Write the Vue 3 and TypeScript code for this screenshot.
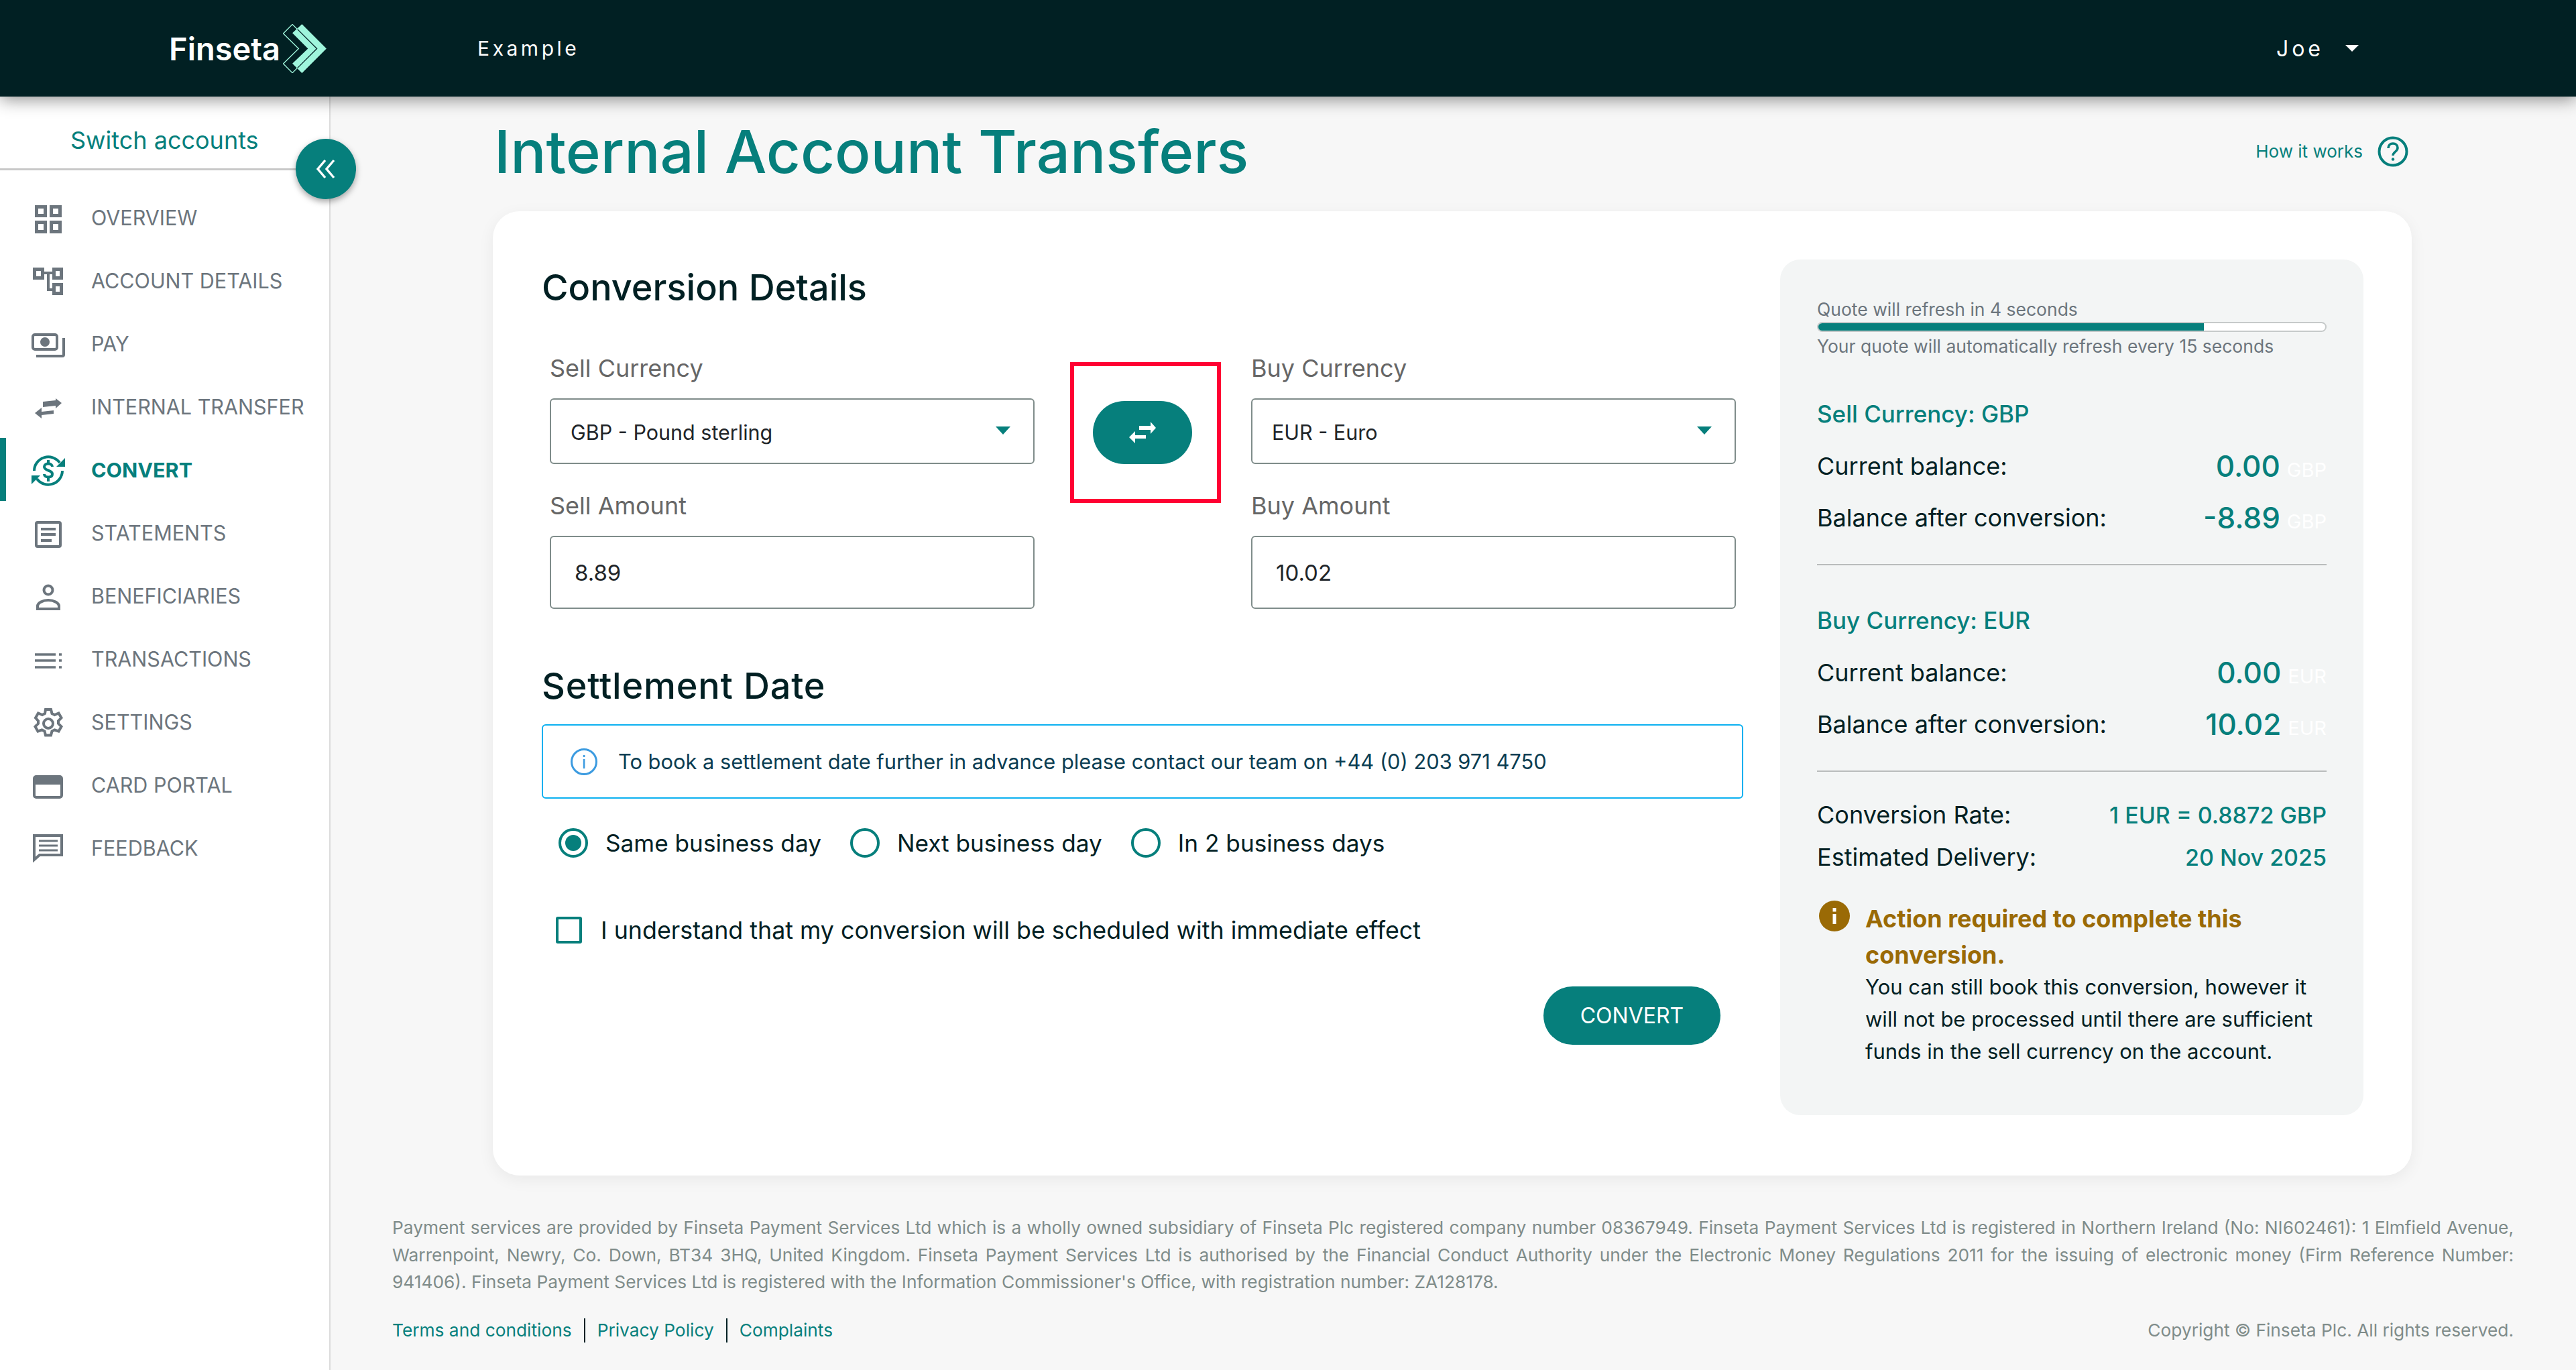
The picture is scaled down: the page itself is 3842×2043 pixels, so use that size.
<template>
  <div class="page">
    <header class="topbar">
      <div class="brand">
        <span class="brand-name">Finseta</span>
        <svg class="brand-mark" viewBox="0 0 195 220" width="65" height="73">
          <polygon points="85,0 195,110 85,220 42,177 112,110 42,40" fill="#9ff5dc" />
          <polygon points="42,1 1,42 70,110 1,178 42,219 152,110" fill="none" stroke="#9ff5dc" stroke-width="4" />
          <polyline points="65,23 152,110 65,197" fill="none" stroke="#012023" stroke-width="4" />
        </svg>
      </div>
      <span class="company">Example</span>
      <div class="user">
        <span>Joe</span>
        <i class="user-caret"></i>
      </div>
    </header>

    <div class="body">
      <aside class="sidebar">
        <div class="switch">Switch accounts</div>
        <button class="collapse" type="button">
          <svg viewBox="0 0 32 30" width="32" height="30" fill="none" stroke="#fff" stroke-width="3.4">
            <polyline points="15,2 4,15 15,28" />
            <polyline points="28,2 17,15 28,28" />
          </svg>
        </button>
        <nav class="nav">
          <a v-for="item in navItems" :key="item.label" class="nav-item" :class="{ active: item.active }">
            <svg class="nav-icon" viewBox="0 0 50 50" width="50" height="50" v-html="item.icon"></svg>
            <span>{{ item.label }}</span>
          </a>
        </nav>
      </aside>

      <main class="content">
        <div class="title-row">
          <h1>Internal Account Transfers</h1>
          <a class="how">
            <span>How it works</span>
            <svg viewBox="0 0 46 46" width="46" height="46" fill="none" stroke="#067f7c">
              <circle cx="23" cy="23" r="20.5" stroke-width="4" />
              <path d="M16 18c0-4.500 3-7 7-7s7 2.500 7 6.500c0 5.500-7 6-7 11.500" stroke-width="3.600" />
              <circle cx="23" cy="34.500" r="2.200" fill="#067f7c" stroke="none" />
            </svg>
          </a>
        </div>

        <section class="card">
          <div class="form">
            <h2>Conversion Details</h2>
            <div class="fields">
              <div class="field-col">
                <label>Sell Currency</label>
                <div class="select">GBP - Pound sterling<i class="caret"></i></div>
                <label class="second">Sell Amount</label>
                <div class="input">8.89</div>
              </div>
              <div class="swap-col">
                <div class="highlight">
                  <button class="swap" type="button">
                    <svg viewBox="0 0 44 34" width="44" height="34" fill="#fff">
                      <polygon points="17,7 34,7 34,1 42,10 34,19 34,13 17,13" />
                      <polygon points="27,21 11,21 11,15 2,24 11,33 11,26 27,26" />
                    </svg>
                  </button>
                </div>
              </div>
              <div class="field-col">
                <label>Buy Currency</label>
                <div class="select">EUR - Euro<i class="caret"></i></div>
                <label class="second">Buy Amount</label>
                <div class="input">10.02</div>
              </div>
            </div>

            <h2 class="settlement">Settlement Date</h2>
            <div class="alert">
              <svg viewBox="0 0 42 42" width="42" height="42" fill="none">
                <circle cx="21" cy="21" r="18.500" stroke="#3c9be0" stroke-width="3" />
                <rect x="19.800" y="17" width="2.600" height="14" fill="#3c9be0" />
                <rect x="19.800" y="11" width="2.600" height="3" fill="#3c9be0" />
              </svg>
              <span>To book a settlement date further in advance please contact our team on +44 (0) 203 971 4750</span>
            </div>
            <div class="radios">
              <label v-for="(opt, i) in dates" :key="opt" class="radio" :class="{ on: i === 0 }">
                <i></i>
                <span>{{ opt }}</span>
              </label>
            </div>
            <label class="check">
              <i></i>
              <span>I understand that my conversion will be scheduled with immediate effect</span>
            </label>
            <div class="actions">
              <button class="convert" type="button">CONVERT</button>
            </div>
          </div>

          <aside class="summary">
            <div class="quote">Quote will refresh in 4 seconds</div>
            <div class="bar"><div class="bar-fill" :style="{ width: progress + '%' }"></div></div>
            <div class="quote under">Your quote will automatically refresh every 15 seconds</div>

            <h3 class="sell-head">Sell Currency: GBP</h3>
            <div class="bal first">
              <span>Current balance:</span>
              <span class="amt">0.00<small>GBP</small></span>
            </div>
            <div class="bal">
              <span>Balance after conversion:</span>
              <span class="amt">-8.89<small>GBP</small></span>
            </div>
            <hr />

            <h3>Buy Currency: EUR</h3>
            <div class="bal first">
              <span>Current balance:</span>
              <span class="amt">0.00<small>EUR</small></span>
            </div>
            <div class="bal">
              <span>Balance after conversion:</span>
              <span class="amt">10.02<small>EUR</small></span>
            </div>
            <hr class="last" />

            <div class="rate">
              <span>Conversion Rate:</span>
              <span class="rate-val">1 EUR = 0.8872 GBP</span>
            </div>
            <div class="rate">
              <span>Estimated Delivery:</span>
              <span class="rate-val">20 Nov 2025</span>
            </div>

            <div class="notice">
              <svg viewBox="0 0 46 46" width="46" height="46">
                <circle cx="23" cy="23" r="23" fill="#9a6a05" />
                <rect x="20.500" y="20" width="5" height="15" fill="#fff" />
                <rect x="20.500" y="11" width="5" height="5.500" fill="#fff" />
              </svg>
              <div>
                <strong>Action required to complete this conversion.</strong>
                <p>You can still book this conversion, however it will not be processed until there are sufficient funds in the sell currency on the account.</p>
              </div>
            </div>
          </aside>
        </section>

        <footer class="foot">
          <p>Payment services are provided by Finseta Payment Services Ltd which is a wholly owned subsidiary of Finseta Plc registered company number 08367949. Finseta Payment Services Ltd is registered in Northern Ireland (No: NI602461): 1 Elmfield Avenue, Warrenpoint, Newry, Co. Down, BT34 3HQ, United Kingdom. Finseta Payment Services Ltd is authorised by the Financial Conduct Authority under the Electronic Money Regulations 2011 for the issuing of electronic money (Firm Reference Number: 941406). Finseta Payment Services Ltd is registered with the Information Commissioner's Office, with registration number: ZA128178.</p>
          <div class="foot-row">
            <div class="links">
              <a>Terms and conditions</a>
              <a>Privacy Policy</a>
              <a>Complaints</a>
            </div>
            <span class="copy">Copyright © Finseta Plc. All rights reserved.</span>
          </div>
        </footer>
      </main>
    </div>
  </div>
</template>

<script setup lang="ts">
const progress = 76

const dates = ['Same business day', 'Next business day', 'In 2 business days']

const line = 'fill="none" stroke="currentColor" stroke-width="4"'
const thick = 'fill="none" stroke="currentColor" stroke-width="5"'

const navItems = [
  {
    label: 'OVERVIEW',
    icon: `<g ${thick}><rect x="7.500" y="9.500" width="13" height="13"/><rect x="29.500" y="9.500" width="13" height="13"/><rect x="7.500" y="32.500" width="13" height="14"/><rect x="29.500" y="32.500" width="13" height="14"/></g>`,
  },
  {
    label: 'ACCOUNT DETAILS',
    icon: `<g ${thick}><rect x="4.500" y="8.500" width="12" height="13"/><rect x="33.500" y="8.500" width="11" height="13"/><rect x="33.500" y="31.500" width="11" height="13"/></g><path d="M19 14h13M25 14v25h7" ${line}/>`,
  },
  {
    label: 'PAY',
    icon: `<g ${line}><rect x="2" y="12" width="36" height="22" rx="3"/><path d="M48 17v25a2 2 0 0 1-2 2H7"/></g><circle cx="20" cy="23" r="7" fill="currentColor"/>`,
  },
  {
    label: 'INTERNAL TRANSFER',
    icon: `<path d="M17 18l19-2v-3l9 7-9 8v-4l-19 2zM33 31l-18 2v-6L5 35l10 8v-5l18-2z" fill="currentColor"/>`,
  },
  {
    label: 'CONVERT',
    active: true,
    icon: `<g ${line}><path d="M4 27A21 21 0 0 1 42 15"/><path d="M46 27A21 21 0 0 1 8 39"/><path d="M31 21c0-3-3-4.500-6-4.500s-6 1.500-6 4.500 3 4.500 6 5.500 6 2 6 5.500-3 4.500-6 4.500-6-1.500-6-4.500M25 11v6M25 37v6"/></g><path d="M50 8v13H37zM0 47V34h13z" fill="currentColor"/>`,
  },
  {
    label: 'STATEMENTS',
    icon: `<g ${line}><rect x="7" y="9" width="36" height="36" rx="2"/><path d="M14 19h22M14 27h22M14 36h16"/></g>`,
  },
  {
    label: 'BENEFICIARIES',
    icon: `<g ${line}><circle cx="25" cy="16" r="6.500"/><path d="M9 44v-4c0-5 8-9 16-9s16 4 16 9v4z"/></g>`,
  },
  {
    label: 'TRANSACTIONS',
    icon: `<g fill="none" stroke="currentColor" stroke-width="3.500"><path d="M5 18h31M5 27h31M5 37h31M41 18h4M41 27h4M41 37h4"/></g>`,
  },
  {
    label: 'SETTINGS',
    icon: `<g ${line} transform="translate(0 2)"><circle cx="25" cy="25" r="7"/><path d="M21 4h8l1.500 6 4 2 6-2.500 4 7-4.500 4.500v4l4.500 4.500-4 7-6-2-4 2-1.500 6h-8l-1.500-6-4-2-6 2-4-7 4.500-4.500v-4L6 16.500l4-7 6 2.500 4-2z"/></g>`,
  },
  {
    label: 'CARD PORTAL',
    icon: `<g ${line}><rect x="4" y="12" width="41" height="31" rx="3"/></g><rect x="4" y="14" width="41" height="10" fill="currentColor"/>`,
  },
  {
    label: 'FEEDBACK',
    icon: `<path d="M4 6H45V35H12L4 42z" ${line}/><path d="M11 14h28M11 21h28M11 28h28" fill="none" stroke="currentColor" stroke-width="3"/>`,
  },
]
</script>

<style>
html,
body {
  margin: 0;
  background: #f7f7f7;
}
</style>

<style scoped>
.page {
  width: 3842px;
  height: 2043px;
  overflow: hidden;
  display: flex;
  flex-direction: column;
  background: #f7f7f7;
  font-family: Inter, "Noto Sans", sans-serif;
  color: #012023;
}

.topbar {
  height: 144px;
  flex: none;
  display: flex;
  align-items: center;
  background: #012023;
  color: #fff;
  box-shadow: 0 4px 24px rgba(0, 0, 0, 0.45);
  position: relative;
  z-index: 3;
  padding-left: 252px;
  padding-right: 324px;
}

.brand {
  display: flex;
  align-items: center;
  gap: 4px;
}

.brand-name {
  font-size: 47px;
  font-weight: 600;
  line-height: 1;
}

.company {
  margin-left: 225px;
  font-size: 30px;
  letter-spacing: 4.500px;
}

.user {
  margin-left: auto;
  display: flex;
  align-items: center;
  gap: 32px;
  font-size: 32px;
  letter-spacing: 5px;
}

.user-caret {
  width: 0;
  height: 0;
  border-left: 10px solid transparent;
  border-right: 10px solid transparent;
  border-top: 10px solid #fff;
}

.body {
  flex: 1;
  display: flex;
  min-height: 0;
}

.sidebar {
  width: 491px;
  flex: none;
  background: #fff;
  border-right: 2px solid #dcdcdc;
  position: relative;
}

.switch {
  height: 110px;
  border-bottom: 3px solid #c8c8c8;
  padding: 22px 0 0 105px;
  box-sizing: border-box;
  display: flex;
  align-items: center;
  font-size: 36px;
  color: #067f7c;
}

.collapse {
  position: absolute;
  top: 63px;
  left: 441px;
  width: 90px;
  height: 90px;
  border: 0;
  padding: 0;
  border-radius: 50%;
  background: #067f7c;
  box-shadow: 0 4px 10px rgba(0, 0, 0, 0.35);
  display: flex;
  align-items: center;
  justify-content: center;
}

.nav {
  padding-top: 23px;
}

.nav-item {
  height: 94.100px;
  display: flex;
  align-items: center;
  gap: 39px;
  padding-left: 47px;
  font-size: 30.500px;
  color: #6c757d;
  position: relative;
}

.nav-item.active {
  color: #067f7c;
  font-weight: 700;
}

.nav-item.active::before {
  content: "";
  position: absolute;
  left: 0;
  top: 0;
  bottom: 0;
  width: 9px;
  background: #067f7c;
}

.nav-icon {
  flex: none;
}

.content {
  flex: 1;
  min-width: 0;
  display: flex;
  flex-direction: column;
  padding-left: 242px;
  padding-right: 245px;
}

.title-row {
  height: 171px;
  box-sizing: border-box;
  flex: none;
  display: flex;
  align-items: center;
  justify-content: space-between;
  padding: 0 5px 8px 2px;
}

h1 {
  margin: 0;
  font-size: 88.600px;
  font-weight: 500;
  color: #067f7c;
}

.how {
  display: flex;
  align-items: center;
  gap: 22px;
  font-size: 26px;
  color: #067f7c;
}

.card {
  flex: none;
  height: 1438px;
  box-sizing: border-box;
  display: flex;
  justify-content: space-between;
  padding: 72px 72px 90px 73px;
  background: #fff;
  border-radius: 40px;
  box-shadow: 0 6px 24px rgba(0, 0, 0, 0.06);
}

.form {
  width: 1792px;
  padding-top: 12px;
}

h2 {
  margin: 0;
  height: 60px;
  line-height: 60px;
  font-size: 54px;
  font-weight: 500;
}

.fields {
  display: grid;
  grid-template-columns: 723px 323px 723px;
  margin: 70px 0 0 12px;
}

.field-col label {
  display: block;
  height: 40px;
  line-height: 40px;
  font-size: 36px;
  color: #666;
}

.field-col .second {
  margin-top: 42px;
}

.select,
.input {
  box-sizing: border-box;
  margin-top: 25px;
  border: 2px solid #7f8c8a;
  border-radius: 6px;
  display: flex;
  align-items: center;
  font-size: 30.500px;
  color: #212529;
}

.select {
  height: 98px;
  padding: 3px 34px 0 29px;
  justify-content: space-between;
}

.input {
  height: 109px;
  padding-left: 35px;
  font-size: 33px;
}

.caret {
  width: 0;
  height: 0;
  border-left: 11px solid transparent;
  border-right: 11px solid transparent;
  border-top: 12px solid #067f7c;
  margin-top: -6px;
}

.swap-col {
  padding: 11px 0 0 53px;
}

.highlight {
  width: 225px;
  height: 210px;
  box-sizing: border-box;
  border: 6px solid #ff0033;
  display: flex;
  align-items: center;
  padding-left: 28px;
}

.swap {
  width: 148px;
  height: 94px;
  border: 0;
  padding: 0;
  border-radius: 47px;
  background: #067f7c;
  display: flex;
  align-items: center;
  justify-content: center;
}

.settlement {
  margin-top: 85px;
  letter-spacing: 0.800px;
}

.alert {
  box-sizing: border-box;
  height: 111px;
  margin-top: 27px;
  border: 2px solid #0bb0f0;
  border-radius: 6px;
  display: flex;
  align-items: center;
  gap: 30px;
  padding-left: 40px;
  font-size: 30.800px;
  color: #0a3d52;
}

.radios {
  display: flex;
  margin: 44px 0 0 25px;
}

.radio {
  display: flex;
  align-items: center;
  gap: 26px;
  font-size: 35.200px;
  height: 44px;
  margin-right: 43px;
}

.radio i {
  box-sizing: border-box;
  width: 44px;
  height: 44px;
  border-radius: 50%;
  border: 4px solid #067f7c;
  background: #fff;
  position: relative;
}

.radio.on i::after {
  content: "";
  position: absolute;
  inset: 6px;
  border-radius: 50%;
  background: #067f7c;
}

.check {
  display: flex;
  align-items: center;
  gap: 28px;
  margin: 88px 0 0 21px;
  font-size: 35.800px;
  height: 40px;
}

.check i {
  box-sizing: border-box;
  width: 39px;
  height: 40px;
  border: 4px solid #067f7c;
  border-radius: 3px;
}

.actions {
  display: flex;
  justify-content: flex-end;
  margin-top: 64px;
  padding-right: 34px;
}

.convert {
  width: 264px;
  height: 87px;
  border: 0;
  border-radius: 44px;
  background: #067f7c;
  color: #fff;
  font-family: inherit;
  font-size: 32px;
}

.summary {
  width: 870px;
  height: 1276px;
  box-sizing: border-box;
  padding: 58px 55px 0;
  background: #f3f5f5;
  border-radius: 30px;
}

.quote {
  height: 32px;
  line-height: 32px;
  font-size: 26.500px;
  color: #6c757d;
}

.bar {
  height: 15px;
  margin-top: 3px;
  box-sizing: border-box;
  border: 2px solid #c6caca;
  border-radius: 8px;
  background: #fff;
  overflow: hidden;
}

.bar-fill {
  height: 100%;
  background: #067f7c;
}

.under {
  margin-top: 5px;
}

h3 {
  margin: 0;
  height: 44px;
  line-height: 44px;
  font-size: 35px;
  font-weight: 500;
  color: #067f7c;
}

.sell-head {
  margin-top: 63px;
}

hr {
  margin: 39px 0 60px;
  border: 0;
  border-top: 2px solid #b9bcbc;
}

hr.last {
  margin-bottom: 39px;
}

.bal {
  display: flex;
  align-items: center;
  justify-content: space-between;
  height: 60px;
  margin-top: 17px;
  font-size: 36px;
}

.bal.first {
  margin-top: 26px;
}

.amt {
  font-size: 44px;
  font-weight: 500;
  color: #067f7c;
}

.amt small {
  font-size: 29px;
  font-weight: 400;
  color: #fff;
  margin-left: 10px;
}

.rate {
  display: flex;
  justify-content: space-between;
  align-items: center;
  height: 50px;
  margin-top: 13px;
  font-size: 36px;
}

.rate-val {
  font-size: 34px;
  font-weight: 500;
  color: #067f7c;
}

.notice {
  display: flex;
  gap: 23px;
  margin-top: 40px;
  padding-left: 3px;
}

.notice svg {
  flex: none;
}

.notice strong {
  display: block;
  font-size: 36px;
  line-height: 54px;
  color: #9a6a05;
}

.notice p {
  margin: -3px 0 0;
  font-size: 31px;
  line-height: 48px;
}

.foot {
  flex: 1;
  padding: 58px 0 0;
  margin: 0 -152px 0 -150px;
  color: #7f8c8a;
  font-size: 26.300px;
}

.foot p {
  margin: 0;
  line-height: 40.500px;
  text-align: justify;
}

.foot-row {
  display: flex;
  justify-content: space-between;
  align-items: center;
  margin-top: 33px;
}

.links {
  display: flex;
}

.links a {
  color: #067f7c;
  padding-right: 18px;
  margin-right: 18px;
  border-right: 2px solid #012023;
  height: 36px;
  line-height: 36px;
}

.links a:last-child {
  border: 0;
}
</style>
